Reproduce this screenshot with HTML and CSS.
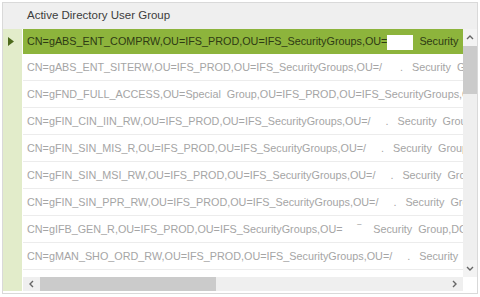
FILE: index.html
```html
<!DOCTYPE html>
<html>
<head>
<meta charset="utf-8">
<link rel="stylesheet" href="styles.css">
</head>
<body>
<div class="grid">
  <div class="corner-head"></div>
  <div class="head">Active Directory User Group</div>
  <div class="head-end"></div>

  <div class="indicators">
    <div class="ind sel"><svg width="6" height="9" viewBox="0 0 6 9"><path d="M0 0 L6 4.5 L0 9 Z" fill="#4d6a1c"/></svg></div>
  </div>
  <div class="rows">
    <div class="row sel">CN=gABS_ENT_COMPRW,OU=IFS_PROD,OU=IFS_SecurityGroups,OU=<span class="redact"></span>  Security  Group</div>
    <div class="row">CN=gABS_ENT_SITERW,OU=IFS_PROD,OU=IFS_SecurityGroups,OU=/      .   Security  Group</div>
    <div class="row">CN=gFND_FULL_ACCESS,OU=Special  Group,OU=IFS_PROD,OU=IFS_SecurityGroups,OU=</div>
    <div class="row">CN=gFIN_CIN_IIN_RW,OU=IFS_PROD,OU=IFS_SecurityGroups,OU=/     .   Security  Group</div>
    <div class="row">CN=gFIN_SIN_MIS_R,OU=IFS_PROD,OU=IFS_SecurityGroups,OU=/     .   Security  Group</div>
    <div class="row">CN=gFIN_SIN_MSI_RW,OU=IFS_PROD,OU=IFS_SecurityGroups,OU=/     .   Security  Group</div>
    <div class="row">CN=gFIN_SIN_PPR_RW,OU=IFS_PROD,OU=IFS_SecurityGroups,OU=/     .   Security  Group</div>
    <div class="row">CN=gIFB_GEN_R,OU=IFS_PROD,OU=IFS_SecurityGroups,OU=     ‾    Security  Group,DC</div>
    <div class="row">CN=gMAN_SHO_ORD_RW,OU=IFS_PROD,OU=IFS_SecurityGroups,OU=/     .   Security  Group</div>
  </div>
  <div class="vscroll">
    <div class="arrow"><svg width="8" height="5" viewBox="0 0 8 5"><path d="M1 4 L4 1 L7 4" fill="none" stroke="#666" stroke-width="1.4"/></svg></div>
    <div class="vthumb"></div>
    <div class="vtrack"></div>
    <div class="arrow"><svg width="8" height="5" viewBox="0 0 8 5"><path d="M1 1 L4 4 L7 1" fill="none" stroke="#666" stroke-width="1.4"/></svg></div>
  </div>

  <div class="ind-foot"></div>
  <div class="hscroll">
    <div class="harrow"><svg width="5" height="8" viewBox="0 0 5 8"><path d="M4 1 L1 4 L4 7" fill="none" stroke="#666" stroke-width="1.4"/></svg></div>
    <div class="hthumb"></div>
    <div class="htrack"></div>
    <div class="harrow"><svg width="5" height="8" viewBox="0 0 5 8"><path d="M1 1 L4 4 L1 7" fill="none" stroke="#666" stroke-width="1.4"/></svg></div>
  </div>
  <div class="corner"></div>
</div>
</body>
</html>
```
FILE: styles.css
```css
html, body {
  margin: 0;
  padding: 0;
  background: #ffffff;
}
body {
  padding: 2px 2px 3px 2px;
  font-family: "Liberation Sans", Arial, sans-serif;
}
.grid {
  width: 476px;
  height: 292px;
  box-sizing: border-box;
  border: 1px solid #d9d9d9;
  display: grid;
  grid-template-columns: 20px 1fr 14px;
  grid-template-rows: 26px 248px 14px;
  overflow: hidden;
}
.corner-head, .head, .head-end {
  background: #efefef;
}
.head {
  font-size: 11.5px;
  color: #3c3c3c;
  padding-left: 4px;
  padding-bottom: 3px;
  display: flex;
  align-items: center;
}
.indicators, .ind-foot {
  background: #e2ecca;
  border-right: 1px solid #ffffff;
}
.ind {
  height: 25px;
  display: flex;
  align-items: center;
  padding-left: 5px;
}
.rows {
  overflow: hidden;
  min-width: 0;
}
.row {
  height: 27px;
  line-height: 26px;
  box-sizing: border-box;
  border-bottom: 1px solid #ececec;
  white-space: pre;
  overflow: hidden;
  font-size: 10.8px;
  color: #a5a5a5;
  padding-left: 4px;
}
.row.sel {
  height: 25px;
  line-height: 25px;
  background: #8db43c;
  color: #2e3a14;
  border-bottom: none;
}
.redact {
  background: #ffffff;
  display: inline-block;
  width: 26px;
  height: 15px;
  vertical-align: middle;
}
.vscroll {
  display: flex;
  flex-direction: column;
  background: #efefef;
}
.arrow {
  height: 17px;
  display: flex;
  align-items: center;
  justify-content: center;
  background: #f3f3f3;
}
.vthumb {
  height: 48px;
  background: #cbcbcb;
}
.vtrack {
  flex: 1;
  background: #efefef;
}
.hscroll {
  display: flex;
  background: #efefef;
}
.harrow {
  width: 17px;
  display: flex;
  align-items: center;
  justify-content: center;
}
.hthumb {
  width: 176px;
  background: #cbcbcb;
}
.htrack {
  flex: 1;
}
.corner {
  background: #ffffff;
}
```
